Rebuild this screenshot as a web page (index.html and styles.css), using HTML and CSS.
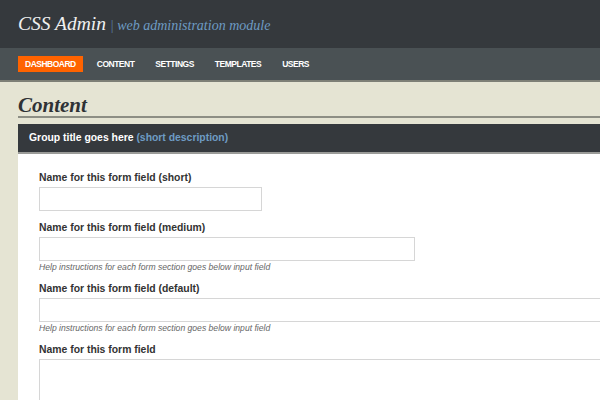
FILE: index.html
```html
<!DOCTYPE html>
<html lang="en">
<head>
    <meta charset="UTF-8">
    <meta name="viewport" content="width=device-width, initial-scale=1.0">
    <title>CSS Admin</title>
    <link rel="stylesheet" href="styles.css">
</head>
<body>
    <div class="header">
        <h1 class="logo">CSS Admin <span class="tagline"><span class="sep">|</span> web administration module</span></h1>
    </div>
    <div class="nav">
        <a href="#" class="active">DASHBOARD</a>
        <a href="#">CONTENT</a>
        <a href="#">SETTINGS</a>
        <a href="#">TEMPLATES</a>
        <a href="#">USERS</a>
    </div>

    <div class="main">
        <h2 class="page-title">Content</h2>

        <div class="group">
            <div class="group-head">Group title goes here <span class="desc">(short description)</span></div>
            <div class="group-body">
                <div class="field">
                    <label for="f1">Name for this form field (short)</label>
                    <input type="text" id="f1" class="short">
                </div>
                <div class="field">
                    <label for="f2">Name for this form field (medium)</label>
                    <input type="text" id="f2" class="medium">
                    <p class="help">Help instructions for each form section goes below input field</p>
                </div>
                <div class="field">
                    <label for="f3">Name for this form field (default)</label>
                    <input type="text" id="f3" class="default">
                    <p class="help">Help instructions for each form section goes below input field</p>
                </div>
                <div class="field">
                    <label for="f4">Name for this form field</label>
                    <textarea id="f4"></textarea>
                </div>
            </div>
        </div>
    </div>
</body>
</html>
```

FILE: styles.css
```css
html, body {
    margin: 0;
    padding: 0;
    overflow: hidden;
}

body {
    background: #e5e4d3;
    font-family: "Liberation Sans", Arial, sans-serif;
    color: #333;
    width: 820px;
}

/* Top bar */
.header {
    background: #35393d;
    height: 48px;
    padding-left: 18px;
    box-sizing: border-box;
}

.logo {
    margin: 0;
    padding-top: 13px;
    font-family: "Liberation Serif", Georgia, serif;
    font-style: italic;
    font-weight: normal;
    font-size: 19.5px;
    line-height: 22px;
    color: #f0f0f0;
}

.tagline {
    font-size: 14px;
    color: #6e9cc4;
}

.sep {
    font-style: normal;
    color: #5a7f9e;
}

/* Navigation */
.nav {
    background: #4a5154;
    height: 32px;
    border-bottom: 2px solid #7d7f76;
    padding-left: 18px;
    display: flex;
    align-items: center;
    gap: 7px;
}

.nav a {
    color: #fff;
    text-decoration: none;
    font-size: 8.5px;
    font-weight: bold;
    letter-spacing: -0.5px;
    line-height: 16px;
    padding: 0 7px;
}

.nav a.active {
    background: #ff6300;
}

/* Page body */
.main {
    padding-left: 18px;
}

.page-title {
    margin: 0;
    padding-top: 12px;
    font-family: "Liberation Serif", Georgia, serif;
    font-style: italic;
    font-weight: bold;
    font-size: 21px;
    line-height: 22px;
    color: #2f3235;
    border-bottom: 2px solid #8d8e84;
}

.group {
    margin-top: 6px;
    background: #fff;
}

.group-head {
    background: #35393d;
    color: #fff;
    font-size: 10.4px;
    font-weight: bold;
    height: 28px;
    line-height: 28px;
    padding-left: 11px;
    border-bottom: 2px solid #9a9b98;
}

.group-head .desc {
    color: #6e9cc4;
}

.group-body {
    padding: 17px 21px 40px;
}

.field {
    margin-bottom: 10px;
}

.field label {
    display: block;
    font-size: 10.4px;
    font-weight: bold;
    line-height: 14px;
    margin-bottom: 2px;
}

.field input,
.field textarea {
    display: block;
    box-sizing: border-box;
    height: 24px;
    border: 1px solid #d6d6d6;
    margin: 0;
    padding: 2px 4px;
    background: #fff;
}

.field input.short {
    width: 223px;
}

.field input.medium {
    width: 376px;
}

.field input.default {
    width: 700px;
}

.field textarea {
    width: 700px;
    height: 120px;
    resize: none;
}

.help {
    margin: 1px 0 -1px;
    font-size: 8.6px;
    line-height: 11px;
    font-style: italic;
    color: #666;
}
```
